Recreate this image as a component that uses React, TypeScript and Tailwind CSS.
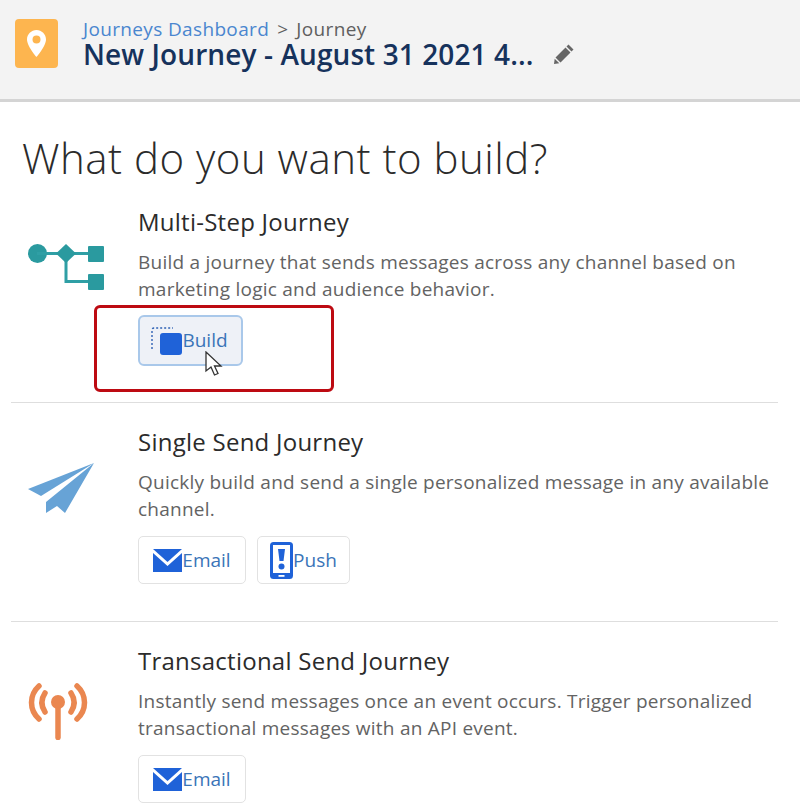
const font = { fontFamily: '"Open Sans", "Noto Sans", sans-serif' };

const EmailIcon = () => (
  <svg width="29" height="23" viewBox="0 0 29 23" className="shrink-0">
    <path d="M0 0h29l-14.500 13z" fill="#1f62d8" />
    <path d="M0 4l14.500 13L29 4v19H0z" fill="#1f62d8" />
  </svg>
);

const PushIcon = () => (
  <svg width="23" height="37" viewBox="0 0 23 37" className="shrink-0">
    <rect x="0" y="0" width="23" height="37" rx="3.500" fill="#1f62d8" />
    <rect x="3" y="3" width="17" height="28" fill="#fff" />
    <path d="M8 7h7l-1.500 12h-4z" fill="#1f62d8" />
    <circle cx="11.500" cy="24.500" r="3" fill="#1f62d8" />
    <rect x="8.500" y="33" width="6" height="1.800" fill="#fff" />
  </svg>
);

const BuildIcon = () => (
  <svg width="31" height="28" viewBox="0 0 31 28" className="shrink-0">
    <path d="M1 22V3a2 2 0 0 1 2-2h19" fill="none" stroke="#2f62b5" strokeWidth="1.400" strokeDasharray="2 2" />
    <rect x="9" y="6" width="22" height="22" rx="3" fill="#1f62d8" />
  </svg>
);

const FlowIcon = () => (
  <svg width="76" height="46" viewBox="0 0 76 46">
    <circle cx="9.500" cy="9.500" r="9.500" fill="#2a9a9f" />
    <path d="M9 9.500h60M38 9.500V37.500h30" fill="none" stroke="#2f9fa5" strokeWidth="3" />
    <path d="M38 0l10 9.500-10 9.500-10-9.500z" fill="#2a9a9f" />
    <rect x="60" y="2" width="16" height="16" rx="1" fill="#2a9a9f" />
    <rect x="60" y="30" width="16" height="16" rx="1" fill="#2a9a9f" />
  </svg>
);

const PlaneIcon = () => (
  <svg width="67" height="50" viewBox="0 0 67 50">
    <path d="M66 0L0 26l13 7z" fill="#67a3d6" />
    <path d="M66 0L18 39v11l11-7 8 7z" fill="#67a3d6" />
  </svg>
);

const SignalIcon = () => (
  <svg width="60" height="57" viewBox="0 0 60 57" fill="none" stroke="#ea8750" strokeLinecap="round">
    <circle cx="30" cy="19" r="7" fill="#ea8750" stroke="none" />
    <path d="M30 22v32.500" strokeWidth="5.500" />
    <path d="M17 10c-4 6-4 13 0 19M43 10c4 6 4 13 0 19" strokeWidth="5.500" />
    <path d="M11 3C1 12 1 27 11 36M49 3c10 9 10 24 0 33" strokeWidth="5.500" />
  </svg>
);

const ActionButton = ({ icon, label, w }: { icon: React.ReactNode; label: string; w: string }) => (
  <button className={`flex h-[48px] items-center justify-center rounded-[5px] border border-[#e2e2e2] bg-white text-[19px] text-[#3a74b8] ${w}`}>
    {icon}
    <span>{label}</span>
  </button>
);

function Section({ icon, iconClass, title, lines, children }: { icon: React.ReactNode; iconClass: string; title: string; lines: string[]; children: React.ReactNode }) {
  return (
    <div className="flex">
      <div className={`w-[138px] shrink-0 ${iconClass}`}>{icon}</div>
      <div className="flex-1">
        <h2 className="text-[24px] leading-[30px] tracking-[0.25px] text-[#2b2b2b]">{title}</h2>
        <p className="mt-[12px] text-[19px] leading-[27px] tracking-[0.24px] whitespace-nowrap text-[#636363]">
          {lines.map((l) => (
            <span key={l} className="block">{l}</span>
          ))}
        </p>
        {children}
      </div>
    </div>
  );
}

export default function App() {
  return (
    <div className="h-[810px] w-[800px] overflow-hidden bg-white" style={font}>
      <header className="flex h-[102px] items-start border-b-[3px] border-[#d4d4d4] bg-[#f3f3f3] pt-[19px] pl-[15px]">
        <div className="flex h-[49px] w-[43px] items-center justify-center rounded-[4px] bg-[#fdb54f]">
          <svg width="19" height="27" viewBox="0 0 19 27">
            <path fillRule="evenodd" d="M9.500 0C4.300 0 0 4.300 0 9.500 0 16 9.500 27 9.500 27S19 16 19 9.500C19 4.300 14.700 0 9.500 0zm0 13.500a4 4 0 1 1 0-8 4 4 0 0 1 0 8z" fill="#fff" />
          </svg>
        </div>
        <div className="ml-[25px]">
          <div className="flex gap-[8px] text-[19px] leading-[20px] tracking-[0.35px] text-[#5f5f5f]">
            <div className="text-[#4a86cf]">Journeys Dashboard</div>
            <div>&gt;</div>
            <div>Journey</div>
          </div>
          <div className="flex items-center">
            <div className="text-[28px] leading-[30px] font-semibold tracking-[0.1px] text-[#16325c]">New Journey - August 31 2021 4...</div>
            <svg width="20" height="20" viewBox="0 0 20 20" className="ml-[20px]">
              <path d="M14.500 0.500l5 5-2 2-5-5zM11.500 3.500l5 5-10 10-5-5zM0.700 14.700l4.600 4.600-5.300 0.700z" fill="#666" />
            </svg>
          </div>
        </div>
      </header>

      <h1 className="mt-[29px] ml-[22px] text-[42px] leading-[54px] font-light tracking-[0.5px] text-[#2b2b2b]">What do you want to build?</h1>

      <div className="mt-[22px]">
        <Section
          icon={<FlowIcon />}
          iconClass="pt-[37px] pl-[28px]"
          title="Multi-Step Journey"
          lines={["Build a journey that sends messages across any channel based on", "marketing logic and audience behavior."]}
        >
          <div className="relative mt-[12px] w-[105px]">
            <button className="flex h-[51px] w-[105px] items-center justify-center rounded-[6px] border-2 border-[#a9c8ea] bg-[#eef1f7] pr-[2px] text-[19px] text-[#3a74b8]">
              <BuildIcon />
              <span>Build</span>
            </button>
            <div className="absolute top-[-10px] left-[-44px] h-[87px] w-[240px] rounded-[6px] border-[3.500px] border-[#bd0a12]" />
            <svg width="19" height="25" viewBox="0 0 19 25" className="absolute top-[36px] left-[66px]">
              <path d="M2 1v19l5-4 3.500 8 3.500-1.500-3.500-7.500H17z" fill="#fff" stroke="#333" strokeWidth="1.300" />
            </svg>
          </div>
        </Section>

        <div className="mt-[36px] ml-[11px] h-[1px] w-[767px] bg-[#dedede]" />

        <div className="mt-[24px]">
          <Section
            icon={<PlaneIcon />}
            iconClass="pt-[36px] pl-[28px]"
            title="Single Send Journey"
            lines={["Quickly build and send a single personalized message in any available", "channel."]}
          >
            <div className="mt-[13px] flex gap-[11px]">
              <ActionButton icon={<EmailIcon />} label="Email" w="w-[108px]" />
              <ActionButton icon={<PushIcon />} label="Push" w="w-[93px]" />
            </div>
          </Section>
        </div>

        <div className="mt-[37px] ml-[11px] h-[1px] w-[767px] bg-[#dedede]" />

        <div className="mt-[24px]">
          <Section
            icon={<SignalIcon />}
            iconClass="pt-[37px] pl-[28px]"
            title="Transactional Send Journey"
            lines={["Instantly send messages once an event occurs. Trigger personalized", "transactional messages with an API event."]}
          >
            <div className="mt-[13px] flex">
              <ActionButton icon={<EmailIcon />} label="Email" w="w-[108px]" />
            </div>
          </Section>
        </div>
      </div>
    </div>
  );
}
